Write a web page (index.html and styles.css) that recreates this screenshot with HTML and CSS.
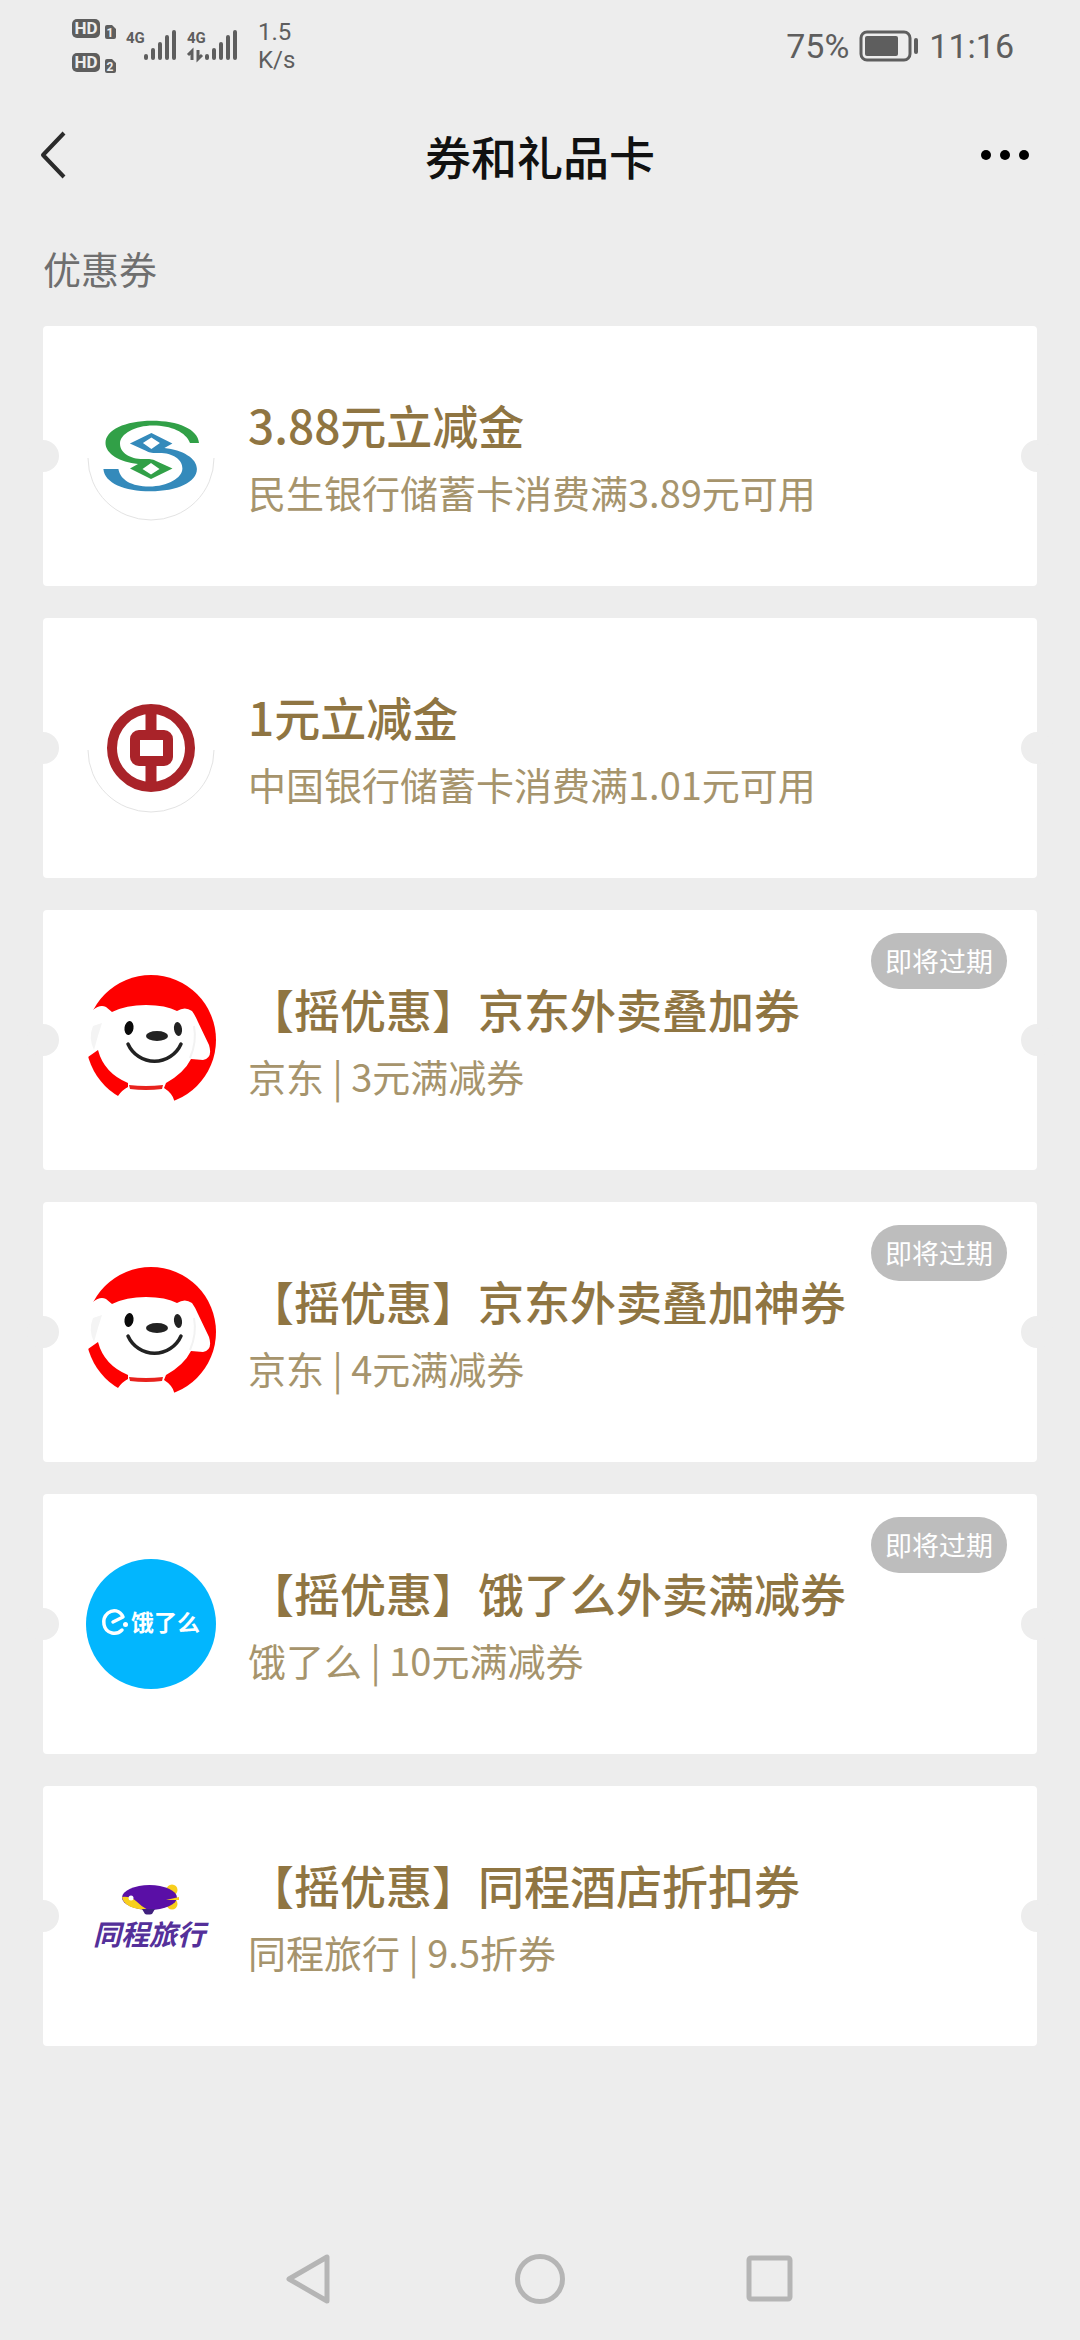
FILE: index.html
```
<!DOCTYPE html>
<html lang="zh-CN">
<head>
    <meta charset="UTF-8">
    <meta name="viewport" content="width=device-width, initial-scale=1.0">
    <title>券和礼品卡</title>
    <link rel="stylesheet" href="styles.css">
</head>
<body>

    <div class="status-bar">
        <div class="status-left">
            <svg class="signal" width="170" height="60" viewBox="70 16 170 60">
                <rect x="72" y="19" width="28" height="19" rx="5"/>
                <text class="hd" x="86" y="34">HD</text>
                <path d="M107 25h5l4 4v8q0 2-2 2h-7q-2 0-2-2v-10q0-2 2-2z"/>
                <text class="sim" x="110" y="37">1</text>
                <rect x="72" y="53" width="28" height="19" rx="5"/>
                <text class="hd" x="86" y="68">HD</text>
                <path d="M107 59h5l4 4v8q0 2-2 2h-7q-2 0-2-2v-10q0-2 2-2z"/>
                <text class="sim" x="110" y="71">2</text>

                <text class="net" x="126" y="43">4G</text>
                <path class="bars" d="M146 56v2M153 50v8M160 44v14M167 37v21M174 32v26"/>

                <text class="net" x="187" y="43">4G</text>
                <path class="arrows" d="M188 55l4-4v9M198 50v9l4-4"/>
                <path class="bars" d="M207 56v2M214 50v8M221 44v14M228 37v21M235 32v26"/>
            </svg>
            <div class="speed">1.5<br>K/s</div>
        </div>
        <div class="status-right">
            <span>75%</span>
            <svg class="battery" width="60" height="32" viewBox="0 0 60 32">
                <rect x="2" y="2" width="49" height="28" rx="6" fill="none" stroke="#5e5e5e" stroke-width="3"/>
                <rect x="6" y="6" width="33" height="20" rx="2" fill="#5e5e5e"/>
                <rect x="55" y="8" width="4" height="16" rx="2" fill="#5e5e5e"/>
            </svg>
            <span>11:16</span>
        </div>
    </div>

    <header class="nav-header">
        <button class="icon-button" aria-label="返回">
            <svg width="60" height="48" viewBox="0 0 60 48">
                <path d="M24 2L3 24l21 22" fill="none" stroke="#2b2b2b" stroke-width="4" stroke-linejoin="round"/>
            </svg>
        </button>
        <h1>券和礼品卡</h1>
        <button class="icon-button" aria-label="更多">
            <svg width="60" height="48" viewBox="0 0 60 48">
                <circle cx="6" cy="24" r="5"/>
                <circle cx="25" cy="24" r="5"/>
                <circle cx="44" cy="24" r="5"/>
            </svg>
        </button>
    </header>

    <main class="coupons">
        <h2>优惠券</h2>

        <ul class="coupon-list">
            <li class="coupon">
                <svg class="logo" viewBox="0 0 130 130">
                    <path d="M2 67a63 62 0 0 0 126 0" fill="none" stroke="#e3e3e3"/>
                    <path fill="#31a047" fill-rule="evenodd" d="M113 52h-9C100 41 85 34.500 67 34.500C49 34.500 34 43 34 52.500C34 62 44 68 57 68C64 68 66 68 70 70L86.500 77.500L65 88L44 77.500L52 73C34 71 19.500 63 19.500 52C19.500 39 39 29.700 66 29.700C92 29.700 112 38 113 52zM65 72L56.500 78L65 83.500L73.500 78z"/>
                    <path transform="rotate(180 65.200 65)" fill="#348abb" fill-rule="evenodd" d="M113 52h-15C96 41 85 34.500 67 34.500C49 34.500 34 43 34 52.500C34 62 44 68 57 68C64 68 66 68 70 70L86.500 77.500L65 88L44 77.500L52 73C34 71 19.500 63 19.500 52C19.500 39 39 29.700 66 29.700C92 29.700 112 38 113 52zM65 72L56.500 78L65 83.500L73.500 78z"/>
                </svg>
                <div class="info">
                    <h3>3.88元立减金</h3>
                    <p>民生银行储蓄卡消费满3.89元可用</p>
                </div>
            </li>

            <li class="coupon">
                <svg class="logo" viewBox="0 0 130 130">
                    <path d="M2 67a63 62 0 0 0 126 0" fill="none" stroke="#e3e3e3"/>
                    <circle cx="65" cy="65" r="39" fill="none" stroke="#a92329" stroke-width="10"/>
                    <path d="M65 24v26M65 80v26" stroke="#a92329" stroke-width="11"/>
                    <rect x="49" y="52" width="33" height="26" rx="4" fill="#fff" stroke="#a92329" stroke-width="10"/>
                </svg>
                <div class="info">
                    <h3>1元立减金</h3>
                    <p>中国银行储蓄卡消费满1.01元可用</p>
                </div>
            </li>

            <li class="coupon">
                <svg class="logo" viewBox="0 0 130 130">
                    <g id="joy">
                        <circle cx="65" cy="65" r="65" fill="#fe0000"/>
                        <path d="M-1 40L7 35Q14 29 20 32L26 37Q40 30 60 30Q80 30 91 36Q99 31 106 36Q109 40 112 47L123 70Q127 83 117 85L105 84Q98 98 80 108L78 113Q86 118 88 125L88 131H26L32 121Q36 115 42 112L42 108Q18 98 12 75L2 82H-1z" fill="#fff"/>
                        <path d="M7 51Q2 63 8 75Q12 60 16 48z" fill="#f4f4f4"/>
                        <path d="M108 51Q111 67 104 83" fill="none" stroke="#f2f2f2" stroke-width="2"/>
                        <path d="M43 110Q60 112 77 110L76 114Q60 116 44 114z" fill="#e8221d"/>
                        <ellipse cx="43" cy="53" rx="4.500" ry="7" transform="rotate(8 43 53)" fill="#0a0a0a"/>
                        <ellipse cx="92" cy="54" rx="4" ry="7" transform="rotate(-8 92 54)" fill="#222"/>
                        <ellipse cx="71" cy="61" rx="11" ry="5" fill="#222"/>
                        <path d="M42 69A29 29 0 0 0 95 69" fill="none" stroke="#222" stroke-width="3.500" stroke-linecap="round"/>
                    </g>
                </svg>
                <div class="info">
                    <h3>【摇优惠】京东外卖叠加券</h3>
                    <p>京东 | 3元满减券</p>
                </div>
                <span class="badge">即将过期</span>
            </li>

            <li class="coupon">
                <svg class="logo" viewBox="0 0 130 130">
                    <use href="#joy"/>
                </svg>
                <div class="info">
                    <h3>【摇优惠】京东外卖叠加神券</h3>
                    <p>京东 | 4元满减券</p>
                </div>
                <span class="badge">即将过期</span>
            </li>

            <li class="coupon">
                <svg class="logo" viewBox="0 0 130 130">
                    <circle cx="65" cy="65" r="65" fill="#02b6fe"/>
                    <path d="M27 63L37 58C34 51 27 50 22 54C15 60 17 72 26 74C30 75 33 74 36 71" fill="none" stroke="#fff" stroke-width="3.500" stroke-linecap="round" stroke-linejoin="round"/>
                    <circle cx="39.500" cy="65.500" r="2.500" fill="#fff"/>
                    <text class="eleme" x="45" y="72">饿了么</text>
                </svg>
                <div class="info">
                    <h3>【摇优惠】饿了么外卖满减券</h3>
                    <p>饿了么 | 10元满减券</p>
                </div>
                <span class="badge">即将过期</span>
            </li>

            <li class="coupon">
                <svg class="logo" viewBox="0 0 130 130">
                    <circle cx="86" cy="39" r="5.500" fill="#f8cf1d"/>
                    <circle cx="86" cy="53" r="5.500" fill="#f8cf1d"/>
                    <ellipse cx="63.500" cy="46.500" rx="27.500" ry="12.500" fill="#5a0fa6"/>
                    <path d="M80 49L93 46v3z" fill="#f8cf1d"/>
                    <path d="M36 46Q44 45 50 50Q56 56 62 59Q38 58 36 46z" fill="#f8cf1d"/>
                    <circle cx="45" cy="47" r="2.500" fill="#fff"/>
                    <path d="M56 58h13l-3 5q-4 1-7 0z" fill="#40207e"/>
                    <text class="tongcheng" x="7" y="94">同程旅行</text>
                </svg>
                <div class="info">
                    <h3>【摇优惠】同程酒店折扣券</h3>
                    <p>同程旅行 | 9.5折券</p>
                </div>
            </li>
        </ul>
    </main>

    <nav class="system-nav">
        <button aria-label="返回">
            <svg width="50" height="50" viewBox="0 0 50 50">
                <path d="M42 3v44L4 25z"/>
            </svg>
        </button>
        <button aria-label="主页">
            <svg width="50" height="50" viewBox="0 0 50 50">
                <circle cx="25" cy="25" r="22.500"/>
            </svg>
        </button>
        <button aria-label="最近任务">
            <svg width="50" height="50" viewBox="0 0 50 50">
                <rect x="4" y="4" width="41" height="41" rx="2"/>
            </svg>
        </button>
    </nav>

</body>
</html>
```

FILE: styles.css
```
* {
    box-sizing: border-box;
    margin: 0;
    padding: 0;
}

body {
    display: flex;
    flex-direction: column;
    min-height: 100vh;
    background-color: #ededed;
    color: #111;
    font-family: 'Noto Sans CJK SC', sans-serif;
}

button {
    border: none;
    background: none;
}

svg {
    display: block;
}

/* status bar */
.status-bar {
    display: flex;
    justify-content: space-between;
    align-items: center;
    height: 92px;
    padding: 0 66px 0 70px;
    color: #5e5e5e;
    font-family: Roboto, sans-serif;
}

.status-left,
.status-right {
    display: flex;
    align-items: center;
}

.status-left {
    gap: 18px;
}

.status-right {
    gap: 10px;
    font-size: 34px;
}

.signal {
    fill: #5e5e5e;
    font-weight: 700;
}

.signal .hd {
    fill: #ededed;
    font-size: 17px;
    text-anchor: middle;
}

.signal .sim {
    fill: #ededed;
    font-size: 12px;
    text-anchor: middle;
}

.signal .net {
    font-size: 15px;
}

.signal .bars {
    fill: none;
    stroke: #5e5e5e;
    stroke-width: 4;
    stroke-linecap: round;
}

.signal .arrows {
    fill: none;
    stroke: #5e5e5e;
    stroke-width: 3;
}

.speed {
    font-size: 24px;
    line-height: 28px;
}

/* page header */
.nav-header {
    display: flex;
    justify-content: space-between;
    align-items: center;
    height: 126px;
    padding: 0 40px;
}

.nav-header h1 {
    font-size: 46px;
    font-weight: 500;
    line-height: 68px;
}

.icon-button {
    width: 60px;
    height: 48px;
}

/* coupons */
.coupons {
    padding: 22px 43px;
}

.coupons h2 {
    margin-bottom: 30px;
    color: #6f6f6f;
    font-size: 38px;
    font-weight: 400;
    line-height: 56px;
}

.coupon-list {
    display: flex;
    flex-direction: column;
    gap: 32px;
    list-style: none;
}

.coupon {
    position: relative;
    display: flex;
    align-items: center;
    gap: 32px;
    min-height: 260px;
    padding: 0 43px;
    border-radius: 4px;
    background-color: #fff;
}

/* ticket notches */
.coupon::before,
.coupon::after {
    content: '';
    position: absolute;
    top: calc(50% - 16px);
    width: 32px;
    height: 32px;
    border-radius: 50%;
    background-color: #ededed;
}

.coupon::before {
    left: -16px;
}

.coupon::after {
    right: -16px;
}

.logo {
    flex: none;
    width: 130px;
    height: 130px;
}

.logo text {
    font-weight: 700;
}

.eleme {
    fill: #fff;
    font-size: 23px;
}

.tongcheng {
    fill: #54309a;
    font-size: 28px;
    font-style: italic;
}

.info {
    padding-top: 4px;
}

.info h3 {
    color: #8f7542;
    font-size: 46px;
    font-weight: 500;
    line-height: 68px;
}

.info p {
    color: #a6946c;
    font-size: 38px;
    line-height: 68px;
}

.badge {
    position: absolute;
    top: 23px;
    right: 30px;
    padding: 0 14px;
    border-radius: 28px;
    background-color: #bdbdbd;
    color: #fff;
    font-size: 27px;
    line-height: 56px;
}

/* system navigation */
.system-nav {
    display: flex;
    justify-content: center;
    gap: 180px;
    margin-top: auto;
    padding: 36px 0;
}

.system-nav svg {
    fill: none;
    stroke: #b5b5b5;
    stroke-width: 5;
    stroke-linejoin: round;
}
```
